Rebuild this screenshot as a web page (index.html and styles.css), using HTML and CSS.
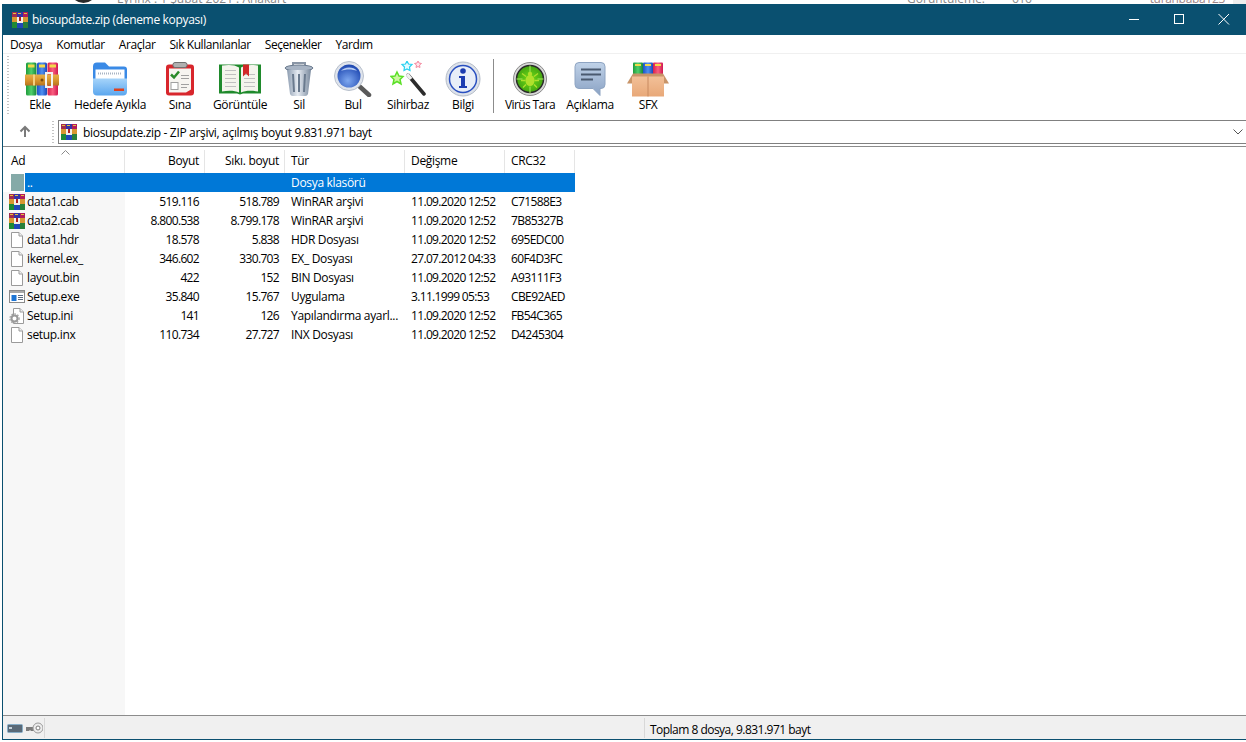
FILE: index.html
```html
<!DOCTYPE html>
<html lang="tr">
<head>
<meta charset="utf-8">
<title>biosupdate.zip (deneme kopyası)</title>
<link rel="stylesheet" href="styles.css">
</head>
<body>
<svg class="defs" aria-hidden="true">
  <defs>
    <linearGradient id="gGreen" x1="0" x2="1" y1="0" y2="0"><stop offset="0" stop-color="#1f9a3c"/><stop offset=".5" stop-color="#4fd06a"/><stop offset="1" stop-color="#16863a"/></linearGradient>
    <linearGradient id="gBlue" x1="0" x2="1" y1="0" y2="0"><stop offset="0" stop-color="#1c52c8"/><stop offset=".5" stop-color="#4f90f0"/><stop offset="1" stop-color="#1a48b8"/></linearGradient>
    <linearGradient id="gRed" x1="0" x2="1" y1="0" y2="0"><stop offset="0" stop-color="#d81f4a"/><stop offset=".5" stop-color="#f85f80"/><stop offset="1" stop-color="#d01850"/></linearGradient>
    <linearGradient id="gBelt" x1="0" x2="0" y1="0" y2="1"><stop offset="0" stop-color="#e8b04a"/><stop offset=".5" stop-color="#d9962e"/><stop offset="1" stop-color="#b87420"/></linearGradient>
    <linearGradient id="gFolder" x1="0" x2="0" y1="0" y2="1"><stop offset="0" stop-color="#a6d4fa"/><stop offset="1" stop-color="#5aa6ee"/></linearGradient>
    <linearGradient id="gCan" x1="0" x2="1" y1="0" y2="0"><stop offset="0" stop-color="#8c9cb0"/><stop offset=".45" stop-color="#e6ebf2"/><stop offset="1" stop-color="#7a8a9e"/></linearGradient>
    <radialGradient id="gLens" cx=".45" cy=".7" r=".7"><stop offset="0" stop-color="#7ea8f0"/><stop offset="1" stop-color="#1c46b0"/></radialGradient>
    <radialGradient id="gBug" cx=".5" cy=".5" r=".55"><stop offset="0" stop-color="#6edc18"/><stop offset="1" stop-color="#3f9f10"/></radialGradient>
    <linearGradient id="gBubble" x1="0" x2="0" y1="0" y2="1"><stop offset="0" stop-color="#c0d2e8"/><stop offset="1" stop-color="#8aa2c4"/></linearGradient>
    <linearGradient id="gBox" x1="0" x2="0" y1="0" y2="1"><stop offset="0" stop-color="#f2c098"/><stop offset="1" stop-color="#e8a878"/></linearGradient>

    <symbol id="rar16" viewBox="0 0 16 16">
      <rect x="0" y="0" width="5" height="5" fill="#a02c50"/>
      <rect x="5" y="0" width="6" height="5" fill="#3434a8"/>
      <rect x="11" y="0" width="5" height="5" fill="#b01c5c"/>
      <rect x="1" y="1" width="3" height="1" fill="#e8c038"/><rect x="6" y="1" width="3" height="1" fill="#e8c038"/><rect x="12" y="1" width="3" height="1" fill="#e8c038"/>
      <rect x="0" y="5" width="16" height="5" fill="#d89830"/>
      <rect x="5" y="5" width="6" height="6" fill="#f4f0e8"/><rect x="7" y="5" width="2" height="4" fill="#b02020"/>
      <rect x="0" y="10" width="5" height="6" fill="#1e8a36"/>
      <rect x="5" y="11" width="6" height="5" fill="#2048b8"/>
      <rect x="11" y="10" width="5" height="6" fill="#28803a"/>
    </symbol>
    <symbol id="doc" viewBox="0 0 16 16">
      <path d="M2.500.5h7.500l3.500 3.500v11.500h-11z" fill="#fff" stroke="#9a9a9a"/>
      <path d="M10 .5v3.500h3.500" fill="#f0f0f0" stroke="#9a9a9a"/>
    </symbol>
    <symbol id="exe" viewBox="0 0 16 16">
      <rect x=".5" y="1.500" width="15" height="12" fill="#fff" stroke="#8a8a8a"/>
      <rect x="1" y="2" width="14" height="2" fill="#a8a8a8"/>
      <rect x="2.500" y="6" width="5" height="6" fill="#1c74d4"/>
      <path d="M9 6.500h5M9 8.500h5M9 10.500h5" stroke="#5a6a80"/>
    </symbol>
    <symbol id="ini" viewBox="0 0 16 16">
      <path d="M4.500.5h6.500l3.500 3.500v11.500h-10z" fill="#fff" stroke="#9a9a9a"/>
      <path d="M11 .5v3.500h3.500" fill="#f0f0f0" stroke="#9a9a9a"/>
      <circle cx="5.500" cy="10.500" r="3" fill="#fff" stroke="#9a9a9a" stroke-width="2"/>
      <circle cx="5.500" cy="10.500" r="4.600" fill="none" stroke="#9a9a9a" stroke-width="1.200" stroke-dasharray="1.500 1.500"/>
    </symbol>
  </defs>
</svg>

<div class="backdrop">
  <span class="avatar"></span>
  <span class="bd-text bd-title">Lyrinx . 1 Şubat 2021 . Anakart</span>
  <span class="bd-text bd-views">Görüntüleme:</span>
  <span class="bd-text bd-count">616</span>
  <span class="bd-text bd-user">turanbaba123</span>
  <span class="bd-scroll"></span>
</div>

<div class="window">
  <header class="titlebar">
    <svg class="ico16"><use href="#rar16"/></svg>
    <span class="title">biosupdate.zip (deneme kopyası)</span>
    <div class="controls">
      <span class="ctl"><svg width="12" height="12" viewBox="0 0 12 12"><path d="M1 5.500h10" stroke="#fff"/></svg></span>
      <span class="ctl"><svg width="12" height="12" viewBox="0 0 12 12"><rect x="1.500" y=".5" width="9" height="9" fill="none" stroke="#fff"/></svg></span>
      <span class="ctl"><svg width="12" height="12" viewBox="0 0 12 12"><path d="M.5 0l10.500 10.500M11 0L.5 10.500" stroke="#fff"/></svg></span>
    </div>
  </header>

  <nav class="menubar">
    <span>Dosya</span><span>Komutlar</span><span>Araçlar</span><span>Sık Kullanılanlar</span><span>Seçenekler</span><span>Yardım</span>
  </nav>

  <section class="toolbar">
    <div class="grip"></div>
    <div class="tools">
      <div class="tool">
        <svg class="tico shift" width="34" height="35" viewBox="0 0 34 35">
          <rect x="1" y="1" width="10.500" height="33" rx="1.500" fill="url(#gGreen)"/>
          <rect x="12" y="1" width="10" height="33" rx="1.500" fill="url(#gBlue)"/>
          <rect x="22.500" y="1" width="10.500" height="33" rx="1.500" fill="url(#gRed)"/>
          <rect x="3" y="3" width="6.500" height="3" fill="#f2d84a"/><rect x="14" y="3" width="6" height="3" fill="#f2d84a"/><rect x="24.500" y="3" width="6.500" height="3" fill="#f2d84a"/>
          <rect x="0" y="13" width="34" height="11" fill="url(#gBelt)"/>
          <rect x="8" y="13" width="2" height="11" fill="#f4d080"/>
          <circle cx="17" cy="18.500" r="1.500" fill="#7a4a10"/>
          <rect x="21" y="11.500" width="6" height="14" fill="none" stroke="#f2f2f2" stroke-width="2"/>
        </svg>
        <span>Ekle</span>
      </div>
      <div class="tool">
        <svg class="tico" width="36" height="35" viewBox="0 0 36 35">
          <path d="M1 5a4 4 0 0 1 4-4h8l4 4h15a3 3 0 0 1 3 3v22H1z" fill="#3a8ae6"/>
          <rect x="3.500" y="8" width="29" height="12" fill="#fff"/>
          <path d="M6 12h24" stroke="#a8b4c4" stroke-width="2" stroke-dasharray="1 1"/>
          <path d="M1 17h34v13a4 4 0 0 1-4 4H5a4 4 0 0 1-4-4z" fill="url(#gFolder)"/>
          <rect x="22" y="27" width="10" height="2.500" fill="#e0401c"/>
        </svg>
        <span>Hedefe Ayıkla</span>
      </div>
      <div class="tool">
        <svg class="tico" width="30" height="35" viewBox="0 0 30 35">
          <rect x="1" y="3" width="28" height="31" rx="3" fill="#d8262c"/>
          <path d="M4 7h22v21l-5 3H4z" fill="#f6f4f0"/>
          <rect x="8" y="1" width="14" height="5" rx="2" fill="#b0b0b0" stroke="#707070"/>
          <path d="M6 13l3 3 5-6" fill="none" stroke="#2a8a2a" stroke-width="2.500"/>
          <rect x="6" y="21" width="7" height="7" fill="#fff" stroke="#a0a0a0"/>
          <path d="M16 14h8M16 17h8M16 23h8M16 26h6" stroke="#a0a0a0"/>
        </svg>
        <span>Sına</span>
      </div>
      <div class="tool">
        <svg class="tico" width="42" height="35" viewBox="0 0 42 35">
          <path d="M0 3h42v29H24l-3 1-3-1H0z" fill="#1f8a2c"/>
          <path d="M3 4c6-1 13-1 17 2v25c-4-2-11-2-17-1z" fill="#f4f4ec"/>
          <path d="M39 4c-6-1-13-1-17 2v25c4-2 11-2 17-1z" fill="#f4f4ec"/>
          <path d="M6 9h11M6 13h11M6 17h11M6 21h11M6 25h11M25 13h11M25 17h11M25 21h11M25 25h11" stroke="#c0c0c0"/>
          <path d="M24 3h6v12l-3-3-3 3z" fill="#d02828"/>
        </svg>
        <span>Görüntüle</span>
      </div>
      <div class="tool">
        <svg class="tico" width="30" height="36" viewBox="0 0 30 36">
          <path d="M9 5V2h12v3" fill="none" stroke="#8a96a6" stroke-width="2"/>
          <ellipse cx="15" cy="7" rx="14" ry="3" fill="#a8b4c4" stroke="#6a7a8e"/>
          <path d="M3 9h24l-3 24a3 3 0 0 1-3 2H9a3 3 0 0 1-3-2z" fill="url(#gCan)"/>
          <path d="M9 13l1 18M15 13v18M21 13l-1 18" stroke="#6a7a8e" stroke-width="2"/>
        </svg>
        <span>Sil</span>
      </div>
      <div class="tool">
        <svg class="tico" width="38" height="36" viewBox="0 0 38 36">
          <path d="M24 24l11 10" stroke="#5a5a5a" stroke-width="4.500" stroke-linecap="round"/>
          <circle cx="15" cy="15" r="14.500" fill="#dfe4ec" stroke="#b8c0cc"/>
          <circle cx="15" cy="15" r="11.500" fill="url(#gLens)"/>
          <path d="M7 10c3-4 12-5 16 0-5-2-11-2-16 0z" fill="#b8cdf4"/>
        </svg>
        <span>Bul</span>
      </div>
      <div class="tool">
        <svg class="tico" width="36" height="36" viewBox="0 0 36 36">
          <path d="M18 14l16 19" stroke="#2c2c2c" stroke-width="3.500" stroke-linecap="round"/>
          <path d="M17 13l4 5" stroke="#f0f0f0" stroke-width="3.500"/>
          <path d="M7 11l2 4 4 .5-3 3 1 4.500-4-2.500-4 2.500 1-4.500-3-3 4-.5z" fill="#cbf7a0" stroke="#5ce028" stroke-width="1.500"/>
          <path d="M17 0l1.500 3 3.500.5-2.500 2.500.5 3.500-3-1.500-3 1.500.5-3.500L12 3.500 15.500 3z" fill="#e4fbff" stroke="#28d0f0" stroke-width="1.200"/>
          <path d="M28 0l1 2 2.500.5-2 1.500.5 2.500-2-1-2 1 .5-2.500-2-1.500 2.500-.5z" fill="#ffe4ea" stroke="#f48aa0"/>
        </svg>
        <span>Sihirbaz</span>
      </div>
      <div class="tool">
        <svg class="tico" width="36" height="36" viewBox="0 0 36 36">
          <circle cx="18" cy="18" r="17" fill="#dde2ea" stroke="#b4bcc8"/>
          <circle cx="18" cy="18" r="13.500" fill="#e8eef8" stroke="#2a50c0" stroke-width="1.500"/>
          <circle cx="18" cy="10" r="2.800" fill="#1c3cb0"/>
          <path d="M14 15h6v10h2v2h-8v-2h2v-8h-2z" fill="#1c3cb0"/>
        </svg>
        <span>Bilgi</span>
      </div>
      <div class="tool-sep"></div>
      <div class="tool">
        <svg class="tico" width="34" height="35" viewBox="0 0 34 35">
          <circle cx="17" cy="17.500" r="16.500" fill="#d8d8d8" stroke="#8a8a8a"/>
          <circle cx="17" cy="17.500" r="13.500" fill="url(#gBug)" stroke="#2a2a2a" stroke-width="1.500"/>
          <path d="M17 4v7M17 25v7M3.500 17.500h6M24.500 17.500h6" stroke="#a8e860"/>
          <ellipse cx="17" cy="19" rx="4.500" ry="5.500" fill="#b0e02c"/>
          <circle cx="17" cy="12.500" r="2.200" fill="#b0e02c"/>
          <path d="M13 15l-4-3M21 15l4-3M12.500 19H8M21.500 19H26M13 23l-3 3M21 23l3 3" stroke="#b0e02c" stroke-width="1.300"/>
        </svg>
        <span class="tight">Virüs Tara</span>
      </div>
      <div class="tool">
        <svg class="tico" width="32" height="35" viewBox="0 0 32 35">
          <path d="M5 1h22a4 4 0 0 1 4 4v18a4 4 0 0 1-4 4h-1v7l-7-7H5a4 4 0 0 1-4-4V5a4 4 0 0 1 4-4z" fill="url(#gBubble)" stroke="#8ea4c2"/>
          <path d="M7 8h20M7 13h20M7 18h12" stroke="#4a5a70" stroke-width="2"/>
        </svg>
        <span>Açıklama</span>
      </div>
      <div class="tool">
        <svg class="tico" width="42" height="35" viewBox="0 0 42 35">
          <rect x="6" y="1" width="10" height="14" rx="1" fill="url(#gGreen)"/>
          <rect x="16" y="1" width="10" height="14" rx="1" fill="url(#gBlue)"/>
          <rect x="26" y="1" width="10" height="14" rx="1" fill="url(#gRed)"/>
          <rect x="8" y="2.500" width="6" height="2" fill="#f2d84a"/><rect x="18" y="2.500" width="6" height="2" fill="#f2d84a"/><rect x="28" y="2.500" width="6" height="2" fill="#f2d84a"/>
          <path d="M0 22l6-10h30l6 10z" fill="#c89468"/>
          <rect x="5" y="15" width="32" height="20" fill="url(#gBox)"/>
          <path d="M21 15v20" stroke="#c88a60"/>
        </svg>
        <span>SFX</span>
      </div>
    </div>
  </section>

  <section class="addrbar">
    <div class="up">
      <svg width="12" height="12" viewBox="0 0 12 12"><path d="M6 12V2M1.500 6.500L6 2l4.500 4.500" fill="none" stroke="#7a7a7a" stroke-width="2"/></svg>
    </div>
    <div class="grip"></div>
    <div class="addr">
      <svg class="ico16"><use href="#rar16"/></svg>
      <span class="addr-text">biosupdate.zip - ZIP arşivi, açılmış boyut 9.831.971 bayt</span>
      <svg class="chev" width="10" height="6" viewBox="0 0 10 6"><path d="M.5 .5L5 5l4.500-4.500" fill="none" stroke="#555"/></svg>
    </div>
  </section>

  <main class="list">
    <div class="row head">
      <div class="c name hname">Ad<svg class="sort" width="9" height="5" viewBox="0 0 9 5"><path d="M.5 4.500L4.500 .5l4 4" fill="none" stroke="#8a8a8a"/></svg></div>
      <div class="c num hnum">Boyut</div>
      <div class="c num hnum">Sıkı. boyut</div>
      <div class="c txt">Tür</div>
      <div class="c txt">Değişme</div>
      <div class="c txt">CRC32</div>
    </div>
    <div class="row sel">
      <div class="c name"><span class="ibox up-ibox"><span class="upfolder"></span></span><span class="lbl">..</span></div>
      <div class="c num"></div><div class="c num"></div>
      <div class="c txt">Dosya klasörü</div><div class="c txt"></div><div class="c txt"></div>
    </div>
    <div class="row">
      <div class="c name"><span class="ibox"><svg class="ico16"><use href="#rar16"/></svg></span><span class="lbl">data1.cab</span></div>
      <div class="c num">519.116</div><div class="c num">518.789</div>
      <div class="c txt">WinRAR arşivi</div><div class="c txt date">11.09.2020 12:52</div><div class="c txt crc">C71588E3</div>
    </div>
    <div class="row">
      <div class="c name"><span class="ibox"><svg class="ico16"><use href="#rar16"/></svg></span><span class="lbl">data2.cab</span></div>
      <div class="c num">8.800.538</div><div class="c num">8.799.178</div>
      <div class="c txt">WinRAR arşivi</div><div class="c txt date">11.09.2020 12:52</div><div class="c txt crc">7B85327B</div>
    </div>
    <div class="row">
      <div class="c name"><span class="ibox"><svg class="ico16"><use href="#doc"/></svg></span><span class="lbl">data1.hdr</span></div>
      <div class="c num">18.578</div><div class="c num">5.838</div>
      <div class="c txt">HDR Dosyası</div><div class="c txt date">11.09.2020 12:52</div><div class="c txt crc">695EDC00</div>
    </div>
    <div class="row">
      <div class="c name"><span class="ibox"><svg class="ico16"><use href="#doc"/></svg></span><span class="lbl">ikernel.ex_</span></div>
      <div class="c num">346.602</div><div class="c num">330.703</div>
      <div class="c txt">EX_ Dosyası</div><div class="c txt date">27.07.2012 04:33</div><div class="c txt crc">60F4D3FC</div>
    </div>
    <div class="row">
      <div class="c name"><span class="ibox"><svg class="ico16"><use href="#doc"/></svg></span><span class="lbl">layout.bin</span></div>
      <div class="c num">422</div><div class="c num">152</div>
      <div class="c txt">BIN Dosyası</div><div class="c txt date">11.09.2020 12:52</div><div class="c txt crc">A93111F3</div>
    </div>
    <div class="row">
      <div class="c name"><span class="ibox"><svg class="ico16"><use href="#exe"/></svg></span><span class="lbl">Setup.exe</span></div>
      <div class="c num">35.840</div><div class="c num">15.767</div>
      <div class="c txt">Uygulama</div><div class="c txt date">3.11.1999 05:53</div><div class="c txt crc">CBE92AED</div>
    </div>
    <div class="row">
      <div class="c name"><span class="ibox"><svg class="ico16"><use href="#ini"/></svg></span><span class="lbl">Setup.ini</span></div>
      <div class="c num">141</div><div class="c num">126</div>
      <div class="c txt">Yapılandırma ayarl...</div><div class="c txt date">11.09.2020 12:52</div><div class="c txt crc">FB54C365</div>
    </div>
    <div class="row">
      <div class="c name"><span class="ibox"><svg class="ico16"><use href="#doc"/></svg></span><span class="lbl">setup.inx</span></div>
      <div class="c num">110.734</div><div class="c num">27.727</div>
      <div class="c txt">INX Dosyası</div><div class="c txt date">11.09.2020 12:52</div><div class="c txt crc">D4245304</div>
    </div>
  </main>

  <footer class="status">
    <div class="st-icons">
      <svg width="16" height="9" viewBox="0 0 16 9"><rect x=".5" y=".5" width="15" height="8" rx="1" fill="#5a6a78" stroke="#88aec8"/><rect x="2" y="3" width="3" height="2" fill="#c8d4dc"/></svg>
      <svg width="17" height="12" viewBox="0 0 17 12"><path d="M0 5h9v4H5L4 8 3 9H0z" fill="#7c7c7c"/><circle cx="12" cy="6" r="5" fill="#ececec" stroke="#9a9a9a"/><circle cx="12" cy="6" r="2" fill="#fff" stroke="#7c7c7c"/></svg>
    </div>
    <div class="st-main"></div>
    <div class="st-info">Toplam 8 dosya, 9.831.971 bayt</div>
  </footer>
</div>
</body>
</html>
```

FILE: styles.css
```css
* { box-sizing: border-box; }
html, body { margin: 0; padding: 0; height: 742px; overflow: hidden; background: #fff; }
body {
  font-family: "Open Sans", "Noto Sans", "Liberation Sans", sans-serif;
  font-size: 12px;
  letter-spacing: -0.32px;
  color: #000;
}
.defs { position: absolute; width: 0; height: 0; }
svg { display: block; flex: none; }
.ico16 { width: 16px; height: 16px; }

.backdrop {
  height: 4px;
  overflow: hidden;
  display: flex;
  align-items: flex-end;
  padding-left: 70px;
  background: #fff;
}
.avatar { flex: none; width: 27px; height: 27px; border-radius: 50%; background: #2a2a2a; margin-bottom: 1px; }
.bd-text { flex: none; font-size: 12px; line-height: 16px; color: #8a8a8a; margin-bottom: -3px; }
.bd-title { margin-left: 20px; letter-spacing: 0; }
.bd-views { margin-left: auto; letter-spacing: 0; }
.bd-count { margin-left: 27px; }
.bd-user { margin-left: 118px; color: #a08888; }
.bd-scroll { flex: none; width: 13px; height: 4px; margin-left: 8px; background: #eee; }

.window {
  margin-left: 2px;
  height: 736px;
  border-left: 1px solid #0b5070;
  border-bottom: 1px solid #0b5070;
  display: flex;
  flex-direction: column;
}

.titlebar {
  height: 31px;
  margin-left: -1px;
  flex: none;
  background: #0a5070;
  display: flex;
  align-items: center;
  padding-left: 10px;
  color: #fff;
}
.title { margin-left: 4px; }
.controls { margin-left: auto; display: flex; }
.ctl { width: 45px; height: 31px; display: flex; align-items: center; justify-content: center; }

.menubar {
  height: 19px;
  flex: none;
  display: flex;
  align-items: center;
  gap: 14px;
  padding-left: 7px;
  letter-spacing: -0.42px;
  border-bottom: 1px solid #f0f0f0;
}

.toolbar { height: 64px; flex: none; display: flex; padding-left: 4px; }
.grip {
  width: 2px;
  flex: none;
  margin: 2px 0;
  background: repeating-linear-gradient(to bottom, #c4c4c4 0 1px, transparent 1px 3px);
}
.tools {
  margin-left: 5px;
  display: grid;
  grid-template-columns: 52px 88px 52px 68px 50px 58px 52px 58px 4px 68px 52px 64px;
}
.tool { display: flex; flex-direction: column; align-items: center; padding-top: 7px; height: 64px; }
.tico { height: 36px; }
.shift { margin-left: 3px; }
.tool span { line-height: 16px; white-space: nowrap; }
.tool .tight { letter-spacing: -0.62px; }
.tool-sep { width: 1px; height: 54px; margin: 5px 0 0 1px; background: #8c8c8c; }

.addrbar { height: 29px; flex: none; display: flex; border-bottom: 1px solid #8c8c8c; }
.up { width: 49px; padding: 7px 0 0 16px; flex: none; }
.addrbar .grip { margin: 3px 0; }
.addr {
  flex: 1;
  margin-left: 4px;
  height: 24px;
  margin-top: 2px;
  border: 1px solid #808080;
  border-right: 0;
  display: flex;
  align-items: center;
  padding-left: 2px;
}
.addr-text { margin-left: 6px; }
.chev { margin-left: auto; margin-right: 3px; }

.list {
  flex: 1;
  background: linear-gradient(to right, #f7f7f7 122px, #fff 122px);
  margin-top: 3px;
}
.row {
  display: grid;
  grid-template-columns: 122px 80px 80px 120px 100px 70px;
  width: 572px;
  height: 19px;
  line-height: 19px;
}
.c { white-space: nowrap; overflow: hidden; }
.num { text-align: right; padding-right: 6px; letter-spacing: -0.66px; }
.date { letter-spacing: -0.66px; }
.crc { letter-spacing: -0.6px; }
.txt { padding-left: 6px; }
.name { display: flex; align-items: center; }
.ibox { width: 22px; height: 19px; flex: none; display: flex; align-items: center; padding-left: 6px; }
.lbl { padding-left: 2px; }

.head { height: 23px; line-height: 21px; background: #fff; }
.head .c { height: 23px; border-right: 1px solid #e5e5e5; position: relative; }
.head .hname { display: block; padding-left: 8px; }
.head .hnum { letter-spacing: -0.32px; padding-right: 5px; }
.sort { position: absolute; left: 58px; top: 0; }

.sel { background: linear-gradient(to right, transparent 22px, #0078d7 22px); color: #fff; }
.up-ibox { background: #fff; }
.upfolder { display: block; width: 13px; height: 17px; margin-left: 2px; background: #85aaa8; }

.status {
  height: 24px;
  flex: none;
  background: #f0f0f0;
  border-top: 1px solid #8c8c8c;
  display: flex;
  align-items: stretch;
}
.st-icons { width: 42px; display: flex; align-items: center; gap: 3px; padding-left: 4px; border-right: 1px solid #d8d8d8; margin: 2px 0 1px; flex: none; }
.st-main { width: 600px; flex: none; border-right: 1px solid #d8d8d8; margin: 2px 0 1px; }
.st-info { padding-left: 5px; line-height: 28px; letter-spacing: -0.52px; }
```
